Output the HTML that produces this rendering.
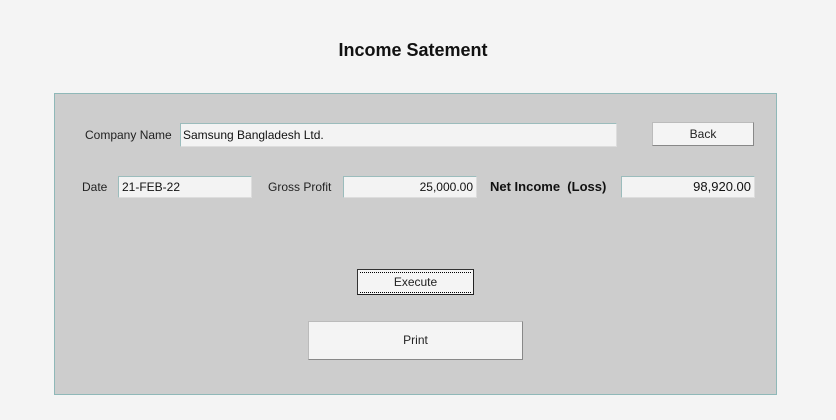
<!DOCTYPE html>
<html><head><meta charset="utf-8"><style>
html,body{margin:0;padding:0;width:836px;height:420px;background:#f4f4f4;font-family:"Liberation Sans",Arial,sans-serif;overflow:hidden}
.a{position:absolute}
.title{left:0;width:826px;top:40px;text-align:center;font-size:18px;font-weight:bold;color:#111}
.panel{left:54px;top:93px;width:721px;height:300px;background:#cdcdcd;border:1px solid #8fb8b8}
.lbl{font-size:12px;color:#222}
.box{background:#f3f3f3;border:1px solid #9bbcbc;border-right-color:#ddd;border-bottom-color:#ddd;font-size:12px;color:#111;box-sizing:border-box;line-height:20px;padding:0 3px}
.btn{background:#f4f4f4;border:1px solid #bbb;border-right-color:#888;border-bottom-color:#888;box-sizing:border-box;text-align:center;font-size:12px;color:#222}
</style></head><body>
<div class="a title">Income Satement</div>
<div class="a panel"></div>
<div class="a lbl" style="left:85px;top:128px">Company Name</div>
<div class="a box" style="left:180px;top:123px;width:437px;height:24px;line-height:22px;padding-left:2px">Samsung Bangladesh Ltd.</div>
<div class="a btn" style="left:652px;top:122px;width:102px;height:24px;line-height:22px">Back</div>
<div class="a lbl" style="left:82px;top:180px">Date</div>
<div class="a box" style="left:118px;top:176px;width:134px;height:22px">21-FEB-22</div>
<div class="a lbl" style="left:268px;top:180px">Gross Profit</div>
<div class="a box" style="left:343px;top:176px;width:134px;height:22px;text-align:right">25,000.00</div>
<div class="a" style="left:490px;top:179px;font-size:13px;font-weight:bold;color:#111;white-space:pre">Net Income  (Loss)</div>
<div class="a box" style="left:621px;top:176px;width:134px;height:22px;text-align:right;font-size:13px">98,920.00</div>
<div class="a btn" style="left:357px;top:269px;width:117px;height:26px;border:1px solid #333;border-right-color:#222;border-bottom-color:#222;padding:2px">
<div style="border-top:1px dotted #000;border-bottom:1px dotted #000;height:19px;line-height:19px">Execute</div></div>
<div class="a btn" style="left:308px;top:321px;width:215px;height:39px;line-height:37px">Print</div>
</body></html>
